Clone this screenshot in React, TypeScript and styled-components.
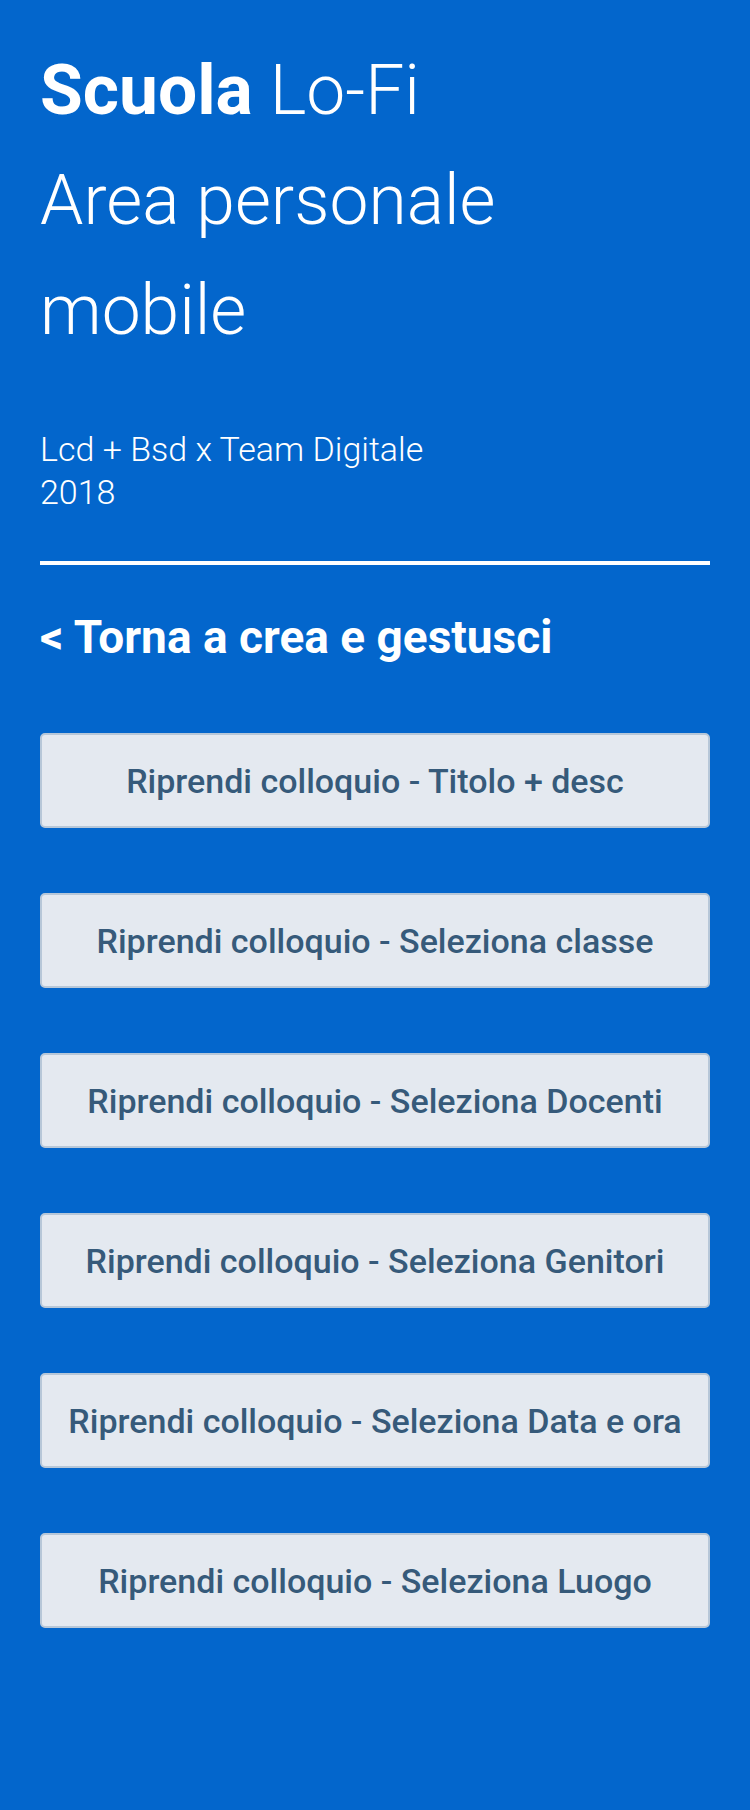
import React from 'react';
import { styled, createGlobalStyle } from 'styled-components';

const GlobalStyle = createGlobalStyle`
  html, body {
    margin: 0;
    padding: 0;
    background-color: #0366cc;
  }
  body {
    font-family: Roboto, "Liberation Sans", sans-serif;
  }
`;

const steps = [
  'Titolo + desc',
  'Seleziona classe',
  'Seleziona Docenti',
  'Seleziona Genitori',
  'Seleziona Data e ora',
  'Seleziona Luogo',
];

function App() {
  return (
    <Page>
      <GlobalStyle />
      <Title>
        <Brand>Scuola</Brand> Lo-Fi
        <br />
        Area personale
        <br />
        mobile
      </Title>
      <Credits>
        Lcd + Bsd x Team Digitale
        <br />
        2018
      </Credits>
      <Rule />
      <BackLink href="#">&lt; Torna a crea e gestusci</BackLink>
      <ButtonList>
        {steps.map((step) => (
          <StepBtn key={step} type="button">
            Riprendi colloquio - {step}
          </StepBtn>
        ))}
      </ButtonList>
    </Page>
  );
}

export default App;

const Page = styled.div`
  min-height: 1810px;
  box-sizing: border-box;
  padding: 36px 40px 0;
  background-color: #0366cc;
  color: #ffffff;
`;

const Title = styled.h1`
  margin: 0;
  font-size: 69.5px;
  line-height: 110px;
  font-weight: 300;
`;

const Brand = styled.span`
  font-weight: 700;
`;

const Credits = styled.p`
  margin: 62px 0 0;
  font-size: 34px;
  line-height: 43px;
  font-weight: 300;
`;

const Rule = styled.hr`
  margin: 47px 0 0;
  border: none;
  height: 4px;
  background-color: #ffffff;
`;

const BackLink = styled.a`
  display: block;
  margin-top: 45px;
  font-size: 46px;
  line-height: 54px;
  font-weight: 700;
  color: #ffffff;
  text-decoration: none;
`;

const ButtonList = styled.div`
  display: flex;
  flex-direction: column;
  gap: 65px;
  margin-top: 69px;
`;

const StepBtn = styled.button`
  display: flex;
  align-items: center;
  justify-content: center;
  height: 95px;
  width: 100%;
  box-sizing: border-box;
  padding: 0;
  background-color: #e4e9f0;
  border: 2px solid #b7c7d8;
  border-radius: 5px;
  font-family: Roboto, "Liberation Sans", sans-serif;
  font-size: 34px;
  font-weight: 500;
  color: #365a7a;
  white-space: nowrap;
`;
